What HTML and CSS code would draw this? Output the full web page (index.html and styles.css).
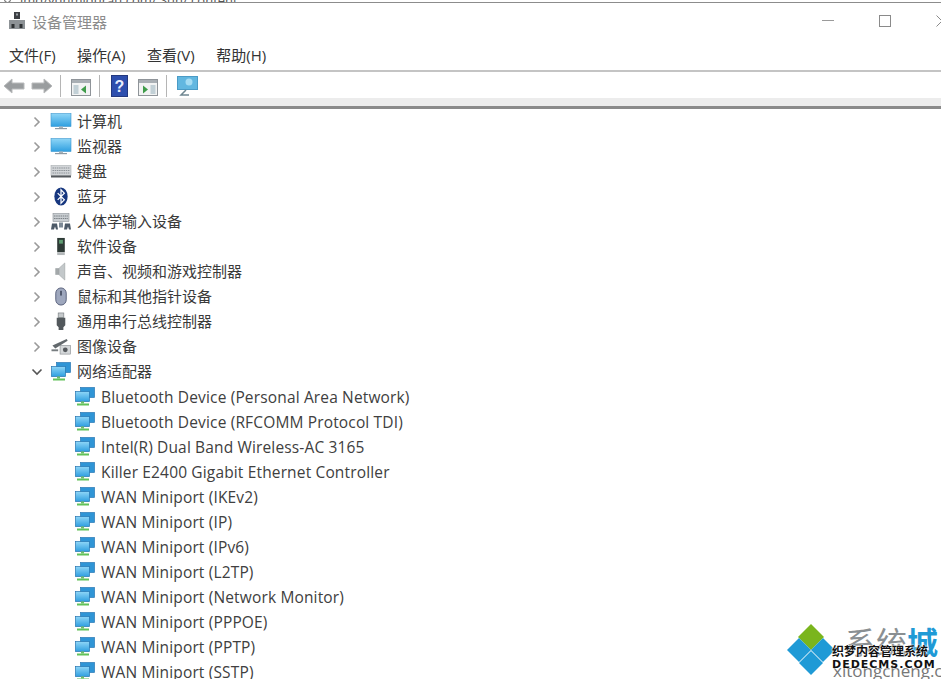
FILE: index.html
```html
<!DOCTYPE html>
<html lang="zh-CN">
<head>
<meta charset="utf-8">
<title>设备管理器</title>
<link rel="stylesheet" href="styles.css">
</head>
<body>
<svg class="defs" width="0" height="0" aria-hidden="true">
  <defs>
    <linearGradient id="scr" x1="0" y1="0" x2="0" y2="1"><stop offset="0" stop-color="#8fd6f7"/><stop offset="1" stop-color="#2f9fe0"/></linearGradient>
  </defs>
  <symbol id="net" viewBox="0 0 20 19">
    <rect x="5.500" y=".5" width="14" height="10" fill="#2f95d6" stroke="#2a78b4" stroke-width=".7"/>
    <rect x=".5" y="4.500" width="14" height="10" fill="url(#scr)" stroke="#2474b0" stroke-width=".7"/>
    <rect x="6" y="14.500" width="3" height="2" fill="#6fbf6a"/>
    <rect x="2" y="16.500" width="12" height="2" fill="#62c25a"/>
  </symbol>
  <symbol id="mon" viewBox="0 0 22 18">
    <rect x="1" y="1" width="20" height="13" fill="url(#scr)" stroke="#3c97cf" stroke-width=".6"/>
    <rect x="9" y="14" width="4" height="1.500" fill="#a9b4bb"/>
    <rect x="5" y="15.500" width="12" height="1.200" fill="#8f9aa3"/>
  </symbol>
  <symbol id="chev" viewBox="0 0 12 12"><path d="M3.500 1.500 8 6l-4.500 4.500" fill="none" stroke="#9a9a9a" stroke-width="1.600"/></symbol>
  <symbol id="down" viewBox="0 0 12 12"><path d="M1.500 3.500 6 8l4.500-4.500" fill="none" stroke="#555" stroke-width="1.600"/></symbol>
</svg>

<div class="url-strip"><i class="url-ring"></i><span class="url-text">jmq/yunmidurau.com/ Sun/ content</span></div>

<header class="titlebar">
  <svg class="app-icon" viewBox="0 0 18 18" width="18" height="18">
    <rect x="6" y="0" width="6" height="7" fill="#3d4044"/>
    <rect x="8" y="1.500" width="2" height="2" fill="#9aa0a5"/>
    <rect x="1" y="8" width="16" height="9" fill="#8d9296"/>
    <rect x="3.500" y="12" width="3" height="4" fill="#2f3235"/>
    <rect x="11.500" y="12" width="3" height="4" fill="#2f3235"/>
  </svg>
  <span class="title">设备管理器</span>
  <div class="win-controls">
    <svg class="wc" viewBox="0 0 12 12" width="12" height="12"><path d="M0 5.500h12" stroke="#9a9a9a" stroke-width="1"/></svg>
    <svg class="wc" viewBox="0 0 12 12" width="12" height="12"><rect x=".5" y=".5" width="11" height="11" fill="none" stroke="#8a8a8a"/></svg>
    <svg class="wc wc-close" viewBox="0 0 12 12" width="12" height="12"><path d="M.5.500l11 11M11.500.500l-11 11" stroke="#8a8a8a"/></svg>
  </div>
</header>

<nav class="menubar">
  <span>文件(F)</span><span>操作(A)</span><span>查看(V)</span><span>帮助(H)</span>
</nav>

<div class="toolbar">
  <svg viewBox="0 0 22 18" width="22" height="18"><path d="M1 9l8-7v4h12v6H9v4z" fill="#9a9d9f" stroke="#b9bbbc"/></svg>
  <svg class="tb-near" viewBox="0 0 22 18" width="22" height="18"><path d="M21 9l-8-7v4H1v6h12v4z" fill="#9a9d9f" stroke="#b9bbbc"/></svg>
  <i class="sep"></i>
  <svg class="tb-wide" viewBox="0 0 20 17" width="20" height="17"><rect x=".5" y=".5" width="19" height="16" fill="#f2f3f3" stroke="#8f9499"/><rect x="1" y="1" width="18" height="3" fill="#a9afb4"/><rect x="2.500" y="6" width="5" height="9" fill="#c2d0d6"/><path d="M15 6.500v8l-5-4z" fill="#3f9c4a"/></svg>
  <i class="sep"></i>
  <svg class="tb-help" viewBox="0 0 17 22" width="17" height="22"><rect x=".5" y=".5" width="16" height="21" fill="#2e4fae" stroke="#24397f"/><text class="help-q" x="8.500" y="17" text-anchor="middle">?</text></svg>
  <svg class="tb-wide" viewBox="0 0 20 17" width="20" height="17"><rect x=".5" y=".5" width="19" height="16" fill="#f2f3f3" stroke="#8f9499"/><rect x="1" y="1" width="18" height="3" fill="#a9afb4"/><path d="M5 6.500v8l5-4z" fill="#3f9c4a"/><rect x="12.500" y="6" width="5" height="9" fill="#c2d0d6"/></svg>
  <i class="sep"></i>
  <svg class="tb-last" viewBox="0 0 22 20" width="22" height="20"><rect x=".5" y=".5" width="20" height="13" fill="#62b7e0" stroke="#4a9bc6"/><circle cx="12" cy="6" r="3.500" fill="#a5dcf3"/><path d="M9 14l-5 5h8" fill="none" stroke="#6f8791" stroke-width="1.500"/></svg>
</div>
<div class="band"></div>

<main class="tree">
  <div class="row"><svg class="chev"><use href="#chev"/></svg><svg class="ico"><use href="#mon"/></svg><span>计算机</span></div>
  <div class="row"><svg class="chev"><use href="#chev"/></svg><svg class="ico"><use href="#mon"/></svg><span>监视器</span></div>
  <div class="row"><svg class="chev"><use href="#chev"/></svg>
    <svg class="ico" viewBox="0 0 22 18"><rect x="1" y="3" width="20" height="10" fill="#d2d5d8" stroke="#a8adb1" stroke-width=".6"/><path d="M2.500 5.500h17M2.500 8h17M2.500 10.500h17" stroke="#8d9398" stroke-dasharray="1.500 .7"/><rect x="1" y="13" width="20" height="2" fill="#55595d"/></svg><span>键盘</span></div>
  <div class="row"><svg class="chev"><use href="#chev"/></svg>
    <svg class="ico" viewBox="0 0 22 20"><ellipse cx="11" cy="10" rx="7" ry="9.500" fill="#17377f"/><path d="M7.500 6.500l7 7-3.500 3.500V3l3.500 3.500-7 7" fill="none" stroke="#fff" stroke-width="1.300"/></svg><span>蓝牙</span></div>
  <div class="row"><svg class="chev"><use href="#chev"/></svg>
    <svg class="ico" viewBox="0 0 22 18"><rect x="3" y="1" width="16" height="8" fill="#c9ced2" stroke="#8d9398" stroke-width=".6"/><path d="M4 3.500h14M4 6h14" stroke="#7c8287" stroke-dasharray="1.500 .7"/><path d="M1 17l1-6h5l1 6H6L5 14l-1 3zM14 17l1-6h5l1 6h-2l-1-3-1 3z" fill="#4d5a68"/><rect x="9" y="10" width="4" height="5" fill="#7d8a96"/></svg><span>人体学输入设备</span></div>
  <div class="row"><svg class="chev"><use href="#chev"/></svg>
    <svg class="ico" viewBox="0 0 22 20"><rect x="7" y="1" width="8" height="15" fill="#2e3a36"/><rect x="9" y="3" width="4" height="4" fill="#5f9c72"/><rect x="7" y="16" width="8" height="3" fill="#b4b8ba"/></svg><span>软件设备</span></div>
  <div class="row"><svg class="chev"><use href="#chev"/></svg>
    <svg class="ico" viewBox="0 0 22 20"><rect x="5" y="6.500" width="4" height="7" fill="#a3a8aa"/><path d="M9 6.500 15 1v18L9 13.500z" fill="#c3c8ca" stroke="#9a9fa2" stroke-width=".6"/></svg><span>声音、视频和游戏控制器</span></div>
  <div class="row"><svg class="chev"><use href="#chev"/></svg>
    <svg class="ico" viewBox="0 0 22 20"><rect x="5.500" y="1" width="11" height="18" rx="5.500" fill="#9ea7bd" stroke="#565f7a"/><rect x="10" y="4" width="2" height="5" fill="#4d556b"/></svg><span>鼠标和其他指针设备</span></div>
  <div class="row"><svg class="chev"><use href="#chev"/></svg>
    <svg class="ico" viewBox="0 0 22 20"><rect x="8" y="1" width="6" height="5" fill="#c5c9cb" stroke="#6f7578" stroke-width=".6"/><path d="M6.500 6h9v8l-2 2v3h-5v-3l-2-2z" fill="#52585c"/></svg><span>通用串行总线控制器</span></div>
  <div class="row"><svg class="chev"><use href="#chev"/></svg>
    <svg class="ico" viewBox="0 0 22 20"><path d="M2 9 17 2l1 2L5 12z" fill="#62686c"/><rect x="1" y="13" width="7" height="2" fill="#777d80"/><rect x="10" y="9" width="11" height="9" fill="#d4d7d9" stroke="#7f8588" stroke-width=".6"/><circle cx="15.500" cy="13.500" r="2.500" fill="#55595d"/></svg><span>图像设备</span></div>
  <div class="row"><svg class="chev"><use href="#down"/></svg><svg class="ico"><use href="#net"/></svg><span>网络适配器</span></div>
  <div class="row child"><svg class="ico"><use href="#net"/></svg><span>Bluetooth Device (Personal Area Network)</span></div>
  <div class="row child"><svg class="ico"><use href="#net"/></svg><span>Bluetooth Device (RFCOMM Protocol TDI)</span></div>
  <div class="row child"><svg class="ico"><use href="#net"/></svg><span>Intel(R) Dual Band Wireless-AC 3165</span></div>
  <div class="row child"><svg class="ico"><use href="#net"/></svg><span>Killer E2400 Gigabit Ethernet Controller</span></div>
  <div class="row child"><svg class="ico"><use href="#net"/></svg><span>WAN Miniport (IKEv2)</span></div>
  <div class="row child"><svg class="ico"><use href="#net"/></svg><span>WAN Miniport (IP)</span></div>
  <div class="row child"><svg class="ico"><use href="#net"/></svg><span>WAN Miniport (IPv6)</span></div>
  <div class="row child"><svg class="ico"><use href="#net"/></svg><span>WAN Miniport (L2TP)</span></div>
  <div class="row child"><svg class="ico"><use href="#net"/></svg><span>WAN Miniport (Network Monitor)</span></div>
  <div class="row child"><svg class="ico"><use href="#net"/></svg><span>WAN Miniport (PPPOE)</span></div>
  <div class="row child"><svg class="ico"><use href="#net"/></svg><span>WAN Miniport (PPTP)</span></div>
  <div class="row child"><svg class="ico"><use href="#net"/></svg><span>WAN Miniport (SSTP)</span></div>
</main>

<aside class="watermark">
  <svg class="wm-logo" viewBox="0 0 48 52" width="48" height="52">
    <path d="M24 0 37 13 24 26 11 13z" fill="#7ab51d"/>
    <path d="M12 14 24 26 12 38 0 26z" fill="#1f9ad6"/>
    <path d="M36 14 48 26 36 38 24 26z" fill="#1f9ad6"/>
    <path d="M24 27 36 39 24 51 12 39z" fill="#1f9ad6"/>
  </svg>
  <span class="wm-cn">系统<b>城</b></span>
  <span class="wm-en">xitongcheng.com</span>
  <span class="wm-dede">织梦内容管理系统</span>
  <span class="wm-dede2">DEDECMS.COM</span>
</aside>
</body>
</html>
```
FILE: styles.css
```css
html, body {
  margin: 0;
  padding: 0;
  width: 941px;
  height: 679px;
  overflow: hidden;
  background: #fff;
  font-family: "Open Sans", "Noto Sans CJK SC", sans-serif;
  color: #333;
}
body { position: relative; }
.defs { position: absolute; }

.url-strip {
  height: 2px;
  overflow: hidden;
  border-bottom: 1px solid #8c8c8c;
  font-size: 13px;
  line-height: 0;
  color: #555;
  padding-left: 4px;
  display: flex;
  gap: 9px;
}
.url-ring {
  flex: none;
  width: 5px;
  height: 5px;
  margin-top: -4px;
  border: 1px solid #555;
  border-radius: 50%;
}
.url-text { display: block; white-space: nowrap; }

.titlebar {
  height: 36px;
  display: flex;
  align-items: center;
  padding-left: 8px;
}
.app-icon { flex: none; }
.title {
  margin-left: 6px;
  font-size: 15px;
  color: #8c8c8c;
}
.win-controls {
  margin-left: auto;
  display: flex;
  align-items: center;
  gap: 45px;
  margin-right: -7px;
}
.wc { display: block; flex: none; }

.menubar {
  height: 31px;
  display: flex;
  align-items: center;
  gap: 21.500px;
  padding-left: 9px;
  font-size: 15px;
  color: #333;
  border-bottom: 2px solid #c4c4c4;
}

.toolbar {
  height: 25px;
  padding-top: 1px;
  display: flex;
  align-items: center;
  gap: 7px;
  padding-left: 3px;
  background: #fff;
}
.toolbar svg { flex: none; }
.sep {
  width: 1px;
  height: 22px;
  background: #b5b5b5;
  flex: none;
}
.tb-near { margin-left: -1px; }
.tb-wide { margin-left: 3px; margin-right: 1px; margin-top: 4px; }
.tb-help { margin-left: 4px; }
.tb-last { margin-left: 3px; }
.help-q {
  fill: #e8eefc;
  font: bold 16px "Liberation Sans", sans-serif;
}
.band {
  height: 8px;
  background: #ececec;
  border-bottom: 3px solid #8a8a8a;
}

.tree {
  display: flex;
  flex-direction: column;
  margin-top: -1px;
}
.row {
  height: 25px;
  flex: none;
  display: flex;
  align-items: center;
  padding-left: 31px;
  font-size: 15px;
  color: #3a3a3a;
}
.row.child {
  padding-left: 75px;
  font-size: 15.500px;
  letter-spacing: .15px;
  color: #404040;
}
.row.child span { margin-top: 2px; }
.chev {
  width: 12px;
  height: 12px;
  flex: none;
  margin-right: 7px;
  margin-top: 2px;
}
.ico {
  width: 22px;
  height: 19px;
  flex: none;
  margin-right: 5px;
  margin-top: 2px;
}
.child .ico {
  width: 20px;
  height: 19px;
  margin-right: 6px;
}

.watermark {
  position: absolute;
  left: 787px;
  top: 624px;
  width: 154px;
  height: 55px;
}
.wm-logo { position: absolute; left: 0; top: 0; }
.wm-cn {
  position: absolute;
  left: 58px;
  top: 1px;
  font-size: 31px;
  line-height: 34px;
  color: #8a8f92;
  white-space: nowrap;
}
.wm-cn b { color: #1f9ad6; font-weight: 700; }
.wm-en {
  position: absolute;
  left: 46px;
  top: 39px;
  font-size: 17px;
  line-height: 16px;
  color: #777;
  white-space: nowrap;
}
.wm-dede {
  position: absolute;
  left: 45px;
  top: 20px;
  font-size: 12px;
  line-height: 16px;
  font-weight: 700;
  color: #111;
  white-space: nowrap;
  text-shadow: 0 0 2px #fff, 0 0 2px #fff;
}
.wm-dede2 {
  position: absolute;
  left: 45px;
  top: 33px;
  font: 700 11px/15px "DejaVu Sans", sans-serif;
  letter-spacing: 1px;
  color: #111;
  white-space: nowrap;
  text-shadow: 0 0 2px #fff, 0 0 2px #fff;
}
```
